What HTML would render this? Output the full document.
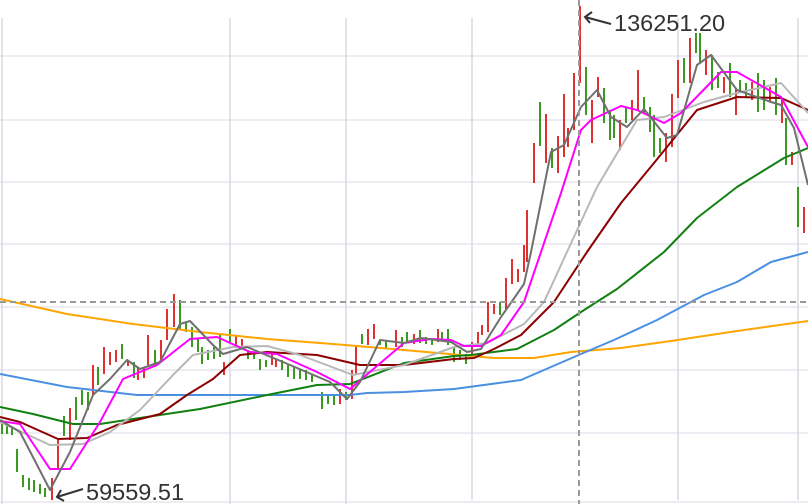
<!DOCTYPE html>
<html><head><meta charset="utf-8"><style>
html,body{margin:0;padding:0;background:#fff;width:808px;height:504px;overflow:hidden}
svg{display:block}
text{font-family:"Liberation Sans",sans-serif;font-size:23.5px;fill:#333}
</style></head><body>
<svg width="808" height="504" viewBox="0 0 808 504" xmlns="http://www.w3.org/2000/svg">
<g stroke="#e6e6ee" stroke-width="1.5">
<line x1="0" y1="56" x2="808" y2="56"/><line x1="0" y1="120" x2="808" y2="120"/>
<line x1="0" y1="182" x2="808" y2="182"/><line x1="0" y1="244" x2="808" y2="244"/>
<line x1="0" y1="307" x2="808" y2="307"/><line x1="0" y1="370" x2="808" y2="370"/>
<line x1="0" y1="433" x2="808" y2="433"/><line x1="0" y1="502" x2="808" y2="502"/>
</g>
<g stroke="#d8d8e2" stroke-width="1.5">
<line x1="2" y1="18" x2="2" y2="504"/><line x1="230" y1="18" x2="230" y2="504"/>
<line x1="346" y1="18" x2="346" y2="504"/><line x1="472" y1="18" x2="472" y2="500"/>
<line x1="678" y1="18" x2="678" y2="500"/><line x1="798" y1="18" x2="798" y2="500"/>
</g>
<g stroke-width="2" id="bars">
<g stroke="#3a9a20">
<line x1="2" y1="420" x2="2" y2="434"/><line x1="7" y1="424" x2="7" y2="434"/><line x1="12" y1="428" x2="12" y2="435"/><line x1="17" y1="449" x2="17" y2="472"/><line x1="23" y1="475" x2="23" y2="487"/><line x1="29" y1="478" x2="29" y2="490"/><line x1="34" y1="480" x2="34" y2="492"/><line x1="40" y1="484" x2="40" y2="494"/><line x1="45" y1="488" x2="45" y2="497"/><line x1="64" y1="416" x2="64" y2="436"/><line x1="76" y1="397" x2="76" y2="420"/><line x1="82" y1="390" x2="82" y2="405"/><line x1="88" y1="392" x2="88" y2="410"/><line x1="98" y1="367" x2="98" y2="385"/><line x1="122" y1="344" x2="122" y2="359"/><line x1="134" y1="362" x2="134" y2="378"/><line x1="155" y1="350" x2="155" y2="367"/><line x1="180" y1="300" x2="180" y2="329"/><line x1="186" y1="322" x2="186" y2="332"/><line x1="192" y1="327" x2="192" y2="347"/><line x1="198" y1="339" x2="198" y2="352"/><line x1="202" y1="347" x2="202" y2="364"/><line x1="208" y1="350" x2="208" y2="360"/><line x1="214" y1="347" x2="214" y2="359"/><line x1="220" y1="334" x2="220" y2="357"/><line x1="230" y1="329" x2="230" y2="342"/><line x1="248" y1="350" x2="248" y2="359"/><line x1="254" y1="352" x2="254" y2="359"/><line x1="260" y1="359" x2="260" y2="370"/><line x1="266" y1="360" x2="266" y2="367"/><line x1="282" y1="360" x2="282" y2="370"/><line x1="288" y1="365" x2="288" y2="377"/><line x1="294" y1="367" x2="294" y2="379"/><line x1="300" y1="369" x2="300" y2="379"/><line x1="306" y1="370" x2="306" y2="380"/><line x1="312" y1="374" x2="312" y2="382"/><line x1="322" y1="392" x2="322" y2="409"/><line x1="328" y1="395" x2="328" y2="404"/><line x1="334" y1="395" x2="334" y2="405"/><line x1="346" y1="392" x2="346" y2="400"/><line x1="362" y1="334" x2="362" y2="344"/><line x1="380" y1="340" x2="380" y2="345"/><line x1="386" y1="340" x2="386" y2="349"/><line x1="402" y1="337" x2="402" y2="347"/><line x1="407" y1="332" x2="407" y2="342"/><line x1="420" y1="330" x2="420" y2="343"/><line x1="426" y1="337" x2="426" y2="344"/><line x1="432" y1="340" x2="432" y2="345"/><line x1="442" y1="332" x2="442" y2="340"/><line x1="448" y1="329" x2="448" y2="345"/><line x1="454" y1="347" x2="454" y2="362"/><line x1="460" y1="350" x2="460" y2="360"/><line x1="466" y1="354" x2="466" y2="364"/><line x1="500" y1="302" x2="500" y2="315"/><line x1="540" y1="102" x2="540" y2="146"/><line x1="552" y1="148" x2="552" y2="168"/><line x1="586" y1="67" x2="586" y2="115"/><line x1="604" y1="88" x2="604" y2="123"/><line x1="610" y1="110" x2="610" y2="140"/><line x1="614" y1="115" x2="614" y2="138"/><line x1="626" y1="108" x2="626" y2="123"/><line x1="644" y1="97" x2="644" y2="113"/><line x1="650" y1="107" x2="650" y2="132"/><line x1="654" y1="115" x2="654" y2="157"/><line x1="660" y1="138" x2="660" y2="153"/><line x1="684" y1="58" x2="684" y2="83"/><line x1="696" y1="33" x2="696" y2="53"/><line x1="700" y1="33" x2="700" y2="63"/><line x1="712" y1="55" x2="712" y2="90"/><line x1="718" y1="72" x2="718" y2="88"/><line x1="730" y1="63" x2="730" y2="97"/><line x1="740" y1="80" x2="740" y2="93"/><line x1="746" y1="83" x2="746" y2="97"/><line x1="758" y1="73" x2="758" y2="112"/><line x1="764" y1="80" x2="764" y2="110"/><line x1="776" y1="78" x2="776" y2="115"/><line x1="786" y1="118" x2="786" y2="165"/><line x1="798" y1="187" x2="798" y2="227"/>
</g>
<g stroke="#e03030">
<line x1="52" y1="478" x2="52" y2="500"/><line x1="58" y1="440" x2="58" y2="470"/><line x1="70" y1="408" x2="70" y2="440"/><line x1="93" y1="365" x2="93" y2="395"/><line x1="104" y1="347" x2="104" y2="374"/><line x1="110" y1="352" x2="110" y2="365"/><line x1="116" y1="350" x2="116" y2="362"/><line x1="128" y1="360" x2="128" y2="366"/><line x1="138" y1="367" x2="138" y2="380"/><line x1="144" y1="367" x2="144" y2="378"/><line x1="148" y1="335" x2="148" y2="365"/><line x1="161" y1="340" x2="161" y2="362"/><line x1="167" y1="309" x2="167" y2="340"/><line x1="174" y1="294" x2="174" y2="327"/><line x1="224" y1="362" x2="224" y2="375"/><line x1="236" y1="335" x2="236" y2="345"/><line x1="242" y1="339" x2="242" y2="349"/><line x1="272" y1="352" x2="272" y2="365"/><line x1="276" y1="359" x2="276" y2="367"/><line x1="340" y1="389" x2="340" y2="404"/><line x1="352" y1="370" x2="352" y2="399"/><line x1="356" y1="345" x2="356" y2="375"/><line x1="368" y1="329" x2="368" y2="345"/><line x1="374" y1="324" x2="374" y2="339"/><line x1="396" y1="330" x2="396" y2="347"/><line x1="414" y1="334" x2="414" y2="344"/><line x1="438" y1="329" x2="438" y2="342"/><line x1="472" y1="342" x2="472" y2="355"/><line x1="478" y1="332" x2="478" y2="345"/><line x1="482" y1="325" x2="482" y2="335"/><line x1="488" y1="302" x2="488" y2="332"/><line x1="494" y1="304" x2="494" y2="314"/><line x1="506" y1="278" x2="506" y2="309"/><line x1="512" y1="259" x2="512" y2="284"/><line x1="518" y1="269" x2="518" y2="282"/><line x1="524" y1="245" x2="524" y2="272"/><line x1="527" y1="210" x2="527" y2="262"/><line x1="534" y1="143" x2="534" y2="183"/><line x1="546" y1="114" x2="546" y2="163"/><line x1="558" y1="136" x2="558" y2="173"/><line x1="564" y1="94" x2="564" y2="157"/><line x1="568" y1="128" x2="568" y2="147"/><line x1="574" y1="73" x2="574" y2="130"/><line x1="580" y1="6" x2="580" y2="83"/><line x1="592" y1="100" x2="592" y2="143"/><line x1="598" y1="77" x2="598" y2="97"/><line x1="620" y1="120" x2="620" y2="150"/><line x1="632" y1="100" x2="632" y2="120"/><line x1="638" y1="70" x2="638" y2="110"/><line x1="666" y1="133" x2="666" y2="162"/><line x1="672" y1="94" x2="672" y2="147"/><line x1="678" y1="60" x2="678" y2="98"/><line x1="690" y1="38" x2="690" y2="83"/><line x1="706" y1="50" x2="706" y2="75"/><line x1="724" y1="77" x2="724" y2="93"/><line x1="736" y1="88" x2="736" y2="115"/><line x1="752" y1="82" x2="752" y2="100"/><line x1="770" y1="87" x2="770" y2="102"/><line x1="782" y1="98" x2="782" y2="123"/><line x1="792" y1="152" x2="792" y2="165"/><line x1="804" y1="207" x2="804" y2="233"/>
</g>
</g>
<g fill="none" stroke-width="2" stroke-linejoin="round">
<polyline stroke="#ffa500" points="0,299 67,314 133,324 200,332 267,339 333,344 404,350 494,358 534,358 571,352 621,348 671,341 737,331 808,321"/>
<polyline stroke="#4a90e2" points="0,374 67,387 137,395 350,395 367,393 404,392 454,389 521,380 544,370 581,354 614,340 657,320 704,295 737,282 771,262 808,252"/>
<polyline stroke="#108010" points="0,407 33,414 73,424 100,424 133,419 200,409 267,395 317,385 350,384 404,363 454,356 471,355 517,349 554,330 581,312 617,289 664,252 697,218 737,187 784,158 808,148"/>
<polyline stroke="#8b0000" points="0,417 20,422 58,439 87,438 117,425 160,414 187,395 213,379 240,355 267,352 317,355 360,365 404,365 454,359 474,358 494,349 521,335 554,302 587,252 621,203 654,163 697,110 737,97 781,98 808,110"/>
<polyline stroke="#b8b8b8" points="0,422 50,445 83,444 110,432 140,410 173,375 193,355 233,347 267,346 300,355 353,375 404,365 454,347 487,343 524,324 544,302 567,252 597,187 637,120 664,117 704,102 737,93 781,83 808,113"/>
<polyline stroke="#ff00ff" points="0,421 20,424 50,469 70,469 100,422 123,379 157,365 190,339 217,337 250,352 277,354 317,372 350,389 404,343 431,339 451,340 464,346 481,346 501,335 524,302 541,252 561,193 581,130 591,120 621,106 637,110 664,123 681,113 721,72 737,72 781,97 808,147"/>
<polyline stroke="#707070" points="0,420 20,432 50,490 70,452 93,395 110,379 127,360 140,369 160,362 180,324 190,321 213,345 223,354 247,347 283,362 330,382 347,399 360,382 380,340 404,343 421,338 451,342 467,352 481,349 501,317 524,284 531,252 551,152 564,145 581,107 597,90 611,117 627,127 644,109 667,138 677,135 697,65 711,55 737,90 771,102 781,105 794,128 808,185"/>
</g>
<g stroke="#9a9a9a" stroke-width="2" stroke-dasharray="6,4" fill="none">
<line x1="0" y1="302" x2="808" y2="302"/>
<line x1="579" y1="0" x2="579" y2="504"/>
</g>
<g stroke="#333" stroke-width="2" fill="none">
<line x1="611" y1="24" x2="585" y2="17"/><polyline points="592,12 585,17 590,23"/>
<line x1="83" y1="489" x2="57" y2="497"/><polyline points="61,490 57,497 64,501"/>
</g>
<text x="614" y="31">136251.20</text>
<text x="86" y="500">59559.51</text>
</svg>
</body></html>
